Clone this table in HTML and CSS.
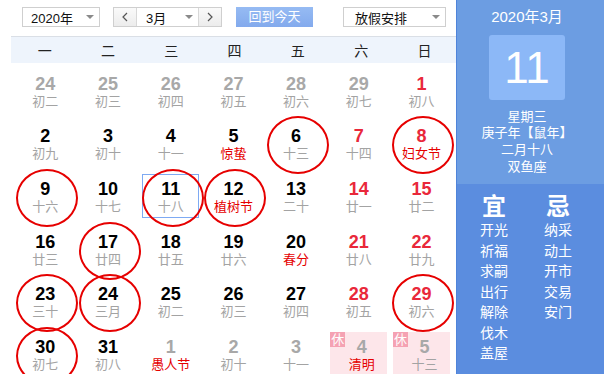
FILE: index.html
```html
<!DOCTYPE html>
<html lang="zh-CN">
<head>
<meta charset="utf-8">
<title>万年历</title>
<link rel="stylesheet" href="styles.css">
</head>
<body>
<div class="main">
  <div class="toolbar">
    <div class="select year"><span>2020年</span><i class="arrow"></i></div>
    <div class="mgroup">
      <div class="navbtn prev"><svg width="8" height="10" viewBox="0 0 8 10"><path d="M6 1 L2 5 L6 9" fill="none" stroke="#555" stroke-width="1.2"/></svg></div>
      <div class="month"><span>3月</span><i class="arrow"></i></div>
      <div class="navbtn next"><svg width="8" height="10" viewBox="0 0 8 10"><path d="M2 1 L6 5 L2 9" fill="none" stroke="#555" stroke-width="1.2"/></svg></div>
    </div>
    <div class="today-btn">回到今天</div>
    <div class="select holiday"><span>放假安排</span><i class="arrow"></i></div>
  </div>
  <div class="weekhead">
    <span>一</span><span>二</span><span>三</span><span>四</span><span>五</span><span>六</span><span>日</span>
  </div>
  <div class="grid">
    <div class="cell other"><div class="box"><span class="n">24</span><span class="l">初二</span></div></div>
    <div class="cell other"><div class="box"><span class="n">25</span><span class="l">初三</span></div></div>
    <div class="cell other"><div class="box"><span class="n">26</span><span class="l">初四</span></div></div>
    <div class="cell other"><div class="box"><span class="n">27</span><span class="l">初五</span></div></div>
    <div class="cell other"><div class="box"><span class="n">28</span><span class="l">初六</span></div></div>
    <div class="cell other"><div class="box"><span class="n">29</span><span class="l">初七</span></div></div>
    <div class="cell wk"><div class="box"><span class="n">1</span><span class="l">初八</span></div></div>

    <div class="cell"><div class="box"><span class="n">2</span><span class="l">初九</span></div></div>
    <div class="cell"><div class="box"><span class="n">3</span><span class="l">初十</span></div></div>
    <div class="cell"><div class="box"><span class="n">4</span><span class="l">十一</span></div></div>
    <div class="cell fest"><div class="box"><span class="n">5</span><span class="l">惊蛰</span></div></div>
    <div class="cell circ"><div class="box"><span class="n">6</span><span class="l">十三</span></div></div>
    <div class="cell wk"><div class="box"><span class="n">7</span><span class="l">十四</span></div></div>
    <div class="cell wk fest circ"><div class="box"><span class="n">8</span><span class="l">妇女节</span></div></div>

    <div class="cell circ"><div class="box"><span class="n">9</span><span class="l">十六</span></div></div>
    <div class="cell"><div class="box"><span class="n">10</span><span class="l">十七</span></div></div>
    <div class="cell circ today"><div class="box"><span class="n">11</span><span class="l">十八</span></div></div>
    <div class="cell fest circ"><div class="box"><span class="n">12</span><span class="l">植树节</span></div></div>
    <div class="cell"><div class="box"><span class="n">13</span><span class="l">二十</span></div></div>
    <div class="cell wk"><div class="box"><span class="n">14</span><span class="l">廿一</span></div></div>
    <div class="cell wk"><div class="box"><span class="n">15</span><span class="l">廿二</span></div></div>

    <div class="cell"><div class="box"><span class="n">16</span><span class="l">廿三</span></div></div>
    <div class="cell circ"><div class="box"><span class="n">17</span><span class="l">廿四</span></div></div>
    <div class="cell"><div class="box"><span class="n">18</span><span class="l">廿五</span></div></div>
    <div class="cell"><div class="box"><span class="n">19</span><span class="l">廿六</span></div></div>
    <div class="cell fest"><div class="box"><span class="n">20</span><span class="l">春分</span></div></div>
    <div class="cell wk"><div class="box"><span class="n">21</span><span class="l">廿八</span></div></div>
    <div class="cell wk"><div class="box"><span class="n">22</span><span class="l">廿九</span></div></div>

    <div class="cell circ"><div class="box"><span class="n">23</span><span class="l">三十</span></div></div>
    <div class="cell circ"><div class="box"><span class="n">24</span><span class="l">三月</span></div></div>
    <div class="cell"><div class="box"><span class="n">25</span><span class="l">初二</span></div></div>
    <div class="cell"><div class="box"><span class="n">26</span><span class="l">初三</span></div></div>
    <div class="cell"><div class="box"><span class="n">27</span><span class="l">初四</span></div></div>
    <div class="cell wk"><div class="box"><span class="n">28</span><span class="l">初五</span></div></div>
    <div class="cell wk circ"><div class="box"><span class="n">29</span><span class="l">初六</span></div></div>

    <div class="cell circ"><div class="box"><span class="n">30</span><span class="l">初七</span></div></div>
    <div class="cell"><div class="box"><span class="n">31</span><span class="l">初八</span></div></div>
    <div class="cell other fest"><div class="box"><span class="n">1</span><span class="l">愚人节</span></div></div>
    <div class="cell other"><div class="box"><span class="n">2</span><span class="l">初十</span></div></div>
    <div class="cell other"><div class="box"><span class="n">3</span><span class="l">十一</span></div></div>
    <div class="cell other fest rest"><div class="box"><span class="xiu">休</span><span class="n">4</span><span class="l">清明</span></div></div>
    <div class="cell other rest"><div class="box"><span class="xiu">休</span><span class="n">5</span><span class="l">十三</span></div></div>
  </div>
</div>
<div class="side">
  <div class="side-top">
    <div class="ym">2020年3月</div>
    <div class="bigday">11</div>
    <div class="info">
      <div>星期三</div>
      <div>庚子年【鼠年】</div>
      <div>二月十八</div>
      <div>双鱼座</div>
    </div>
  </div>
  <div class="yiji">
    <div class="col">
      <div class="head">宜</div>
      <div>开光</div><div>祈福</div><div>求嗣</div><div>出行</div><div>解除</div><div>伐木</div><div>盖屋</div>
    </div>
    <div class="col">
      <div class="head">忌</div>
      <div>纳采</div><div>动土</div><div>开市</div><div>交易</div><div>安门</div>
    </div>
  </div>
</div>
</body>
</html>
```

FILE: styles.css
```css
* { box-sizing: border-box; }
html, body { margin: 0; padding: 0; }
body {
  width: 604px;
  height: 374px;
  overflow: hidden;
  display: flex;
  background: #fff;
  font-family: "Liberation Sans", Arial, "Noto Sans CJK SC", sans-serif;
  color: #000;
}
.main {
  width: 456px;
  flex: none;
  padding-left: 11px;
}
.toolbar {
  height: 36px;
  display: flex;
  align-items: flex-start;
  padding-top: 7px;
}
.select {
  height: 20px;
  border: 1px solid #cfcfcf;
  background: #fff;
  display: flex;
  align-items: center;
  font-size: 13px;
  color: #111;
}
.arrow {
  margin-left: auto;
  margin-right: 5px;
  width: 0;
  height: 0;
  border-left: 4px solid transparent;
  border-right: 4px solid transparent;
  border-top: 4px solid #8a8a8a;
}
.year { margin-left: 11px; width: 78px; padding-left: 8px; }
.mgroup {
  margin-left: 13px;
  width: 109px;
  height: 20px;
  display: flex;
  border: 1px solid #cfcfcf;
  font-size: 13px;
}
.navbtn {
  width: 23px;
  display: flex;
  align-items: center;
  justify-content: center;
  background: linear-gradient(#fafafa, #ececec);
}
.prev { border-right: 1px solid #d8d8d8; }
.next { border-left: 1px solid #d8d8d8; }
.month {
  flex: 1;
  display: flex;
  align-items: center;
  padding-left: 9px;
  color: #111;
}
.today-btn {
  margin-left: 14px;
  width: 77px;
  height: 20px;
  background: linear-gradient(#96bbf3, #83aaed);
  color: #fff;
  font-size: 13px;
  line-height: 20px;
  text-align: center;
}
.holiday { margin-left: 30px; width: 103px; padding-left: 11px; }

.weekhead {
  height: 27px;
  border-top: 1px solid #dadfe6;
  background: #eef4fc;
  display: grid;
  grid-template-columns: repeat(7, 63.3px);
  padding-left: 2px;
  align-items: center;
  font-size: 14px;
  color: #222;
}
.weekhead span { text-align: center; }

.grid {
  margin-left: 3px;
  display: grid;
  grid-template-columns: repeat(7, 62.7px);
  grid-auto-rows: 52.7px;
}
.cell {
  position: relative;
  padding-top: 5.5px;
}
.box {
  position: relative;
  width: 57px;
  height: 44px;
  margin: 0 auto;
  display: flex;
  flex-direction: column;
  align-items: center;
  padding-top: 6px;
}
.n {
  font-family: "Liberation Sans", Arial, sans-serif;
  font-weight: bold;
  font-size: 18px;
  line-height: 18px;
  color: #000;
}
.l {
  font-size: 13px;
  line-height: 17px;
  color: #a3a3a3;
  white-space: nowrap;
}
.other .n { color: #a8a8a8; }
.wk .n { color: #e9283a; }
.fest .l { color: #e50000; }
.today .box { border: 1px solid #7eaaf3; padding-top: 5px; }
.rest .box { background: #fde6ea; padding-left: 6px; }
.xiu {
  position: absolute;
  left: 0;
  top: 0;
  width: 15px;
  height: 15px;
  background: #f5a2b3;
  color: #fff;
  font-size: 13px;
  line-height: 15px;
  text-align: center;
}
.circ::after {
  content: "";
  position: absolute;
  left: 50%;
  top: 0.5px;
  width: 58px;
  height: 54px;
  margin-left: -29px;
  border: 2px solid #e60000;
  border-radius: 50%;
  pointer-events: none;
}

.side {
  flex: 1;
  background: #5b8ddf;
  border-left: 1px solid #4f84da;
  color: #fff;
  display: flex;
  flex-direction: column;
}
.side-top {
  height: 184px;
  background: #6c9de2;
  padding-right: 7px;
  display: flex;
  flex-direction: column;
  align-items: center;
}
.ym {
  padding-top: 7px;
  font-size: 15px;
  line-height: 20px;
}
.bigday {
  margin-top: 8px;
  width: 76px;
  height: 65px;
  background: #8cb8f7;
  border-radius: 3px;
  font-family: "Liberation Sans", Arial, sans-serif;
  font-size: 44px;
  line-height: 65px;
  text-align: center;
}
.info {
  margin-top: 8.5px;
  font-size: 13px;
  line-height: 16.7px;
  text-align: center;
}
.yiji {
  display: flex;
  padding-left: 17px;
  padding-top: 10px;
  gap: 24px;
}
.col {
  width: 40px;
  text-align: center;
  font-size: 14px;
  line-height: 20.5px;
}
.col .head {
  font-size: 24px;
  line-height: 26px;
  font-weight: bold;
}
```
